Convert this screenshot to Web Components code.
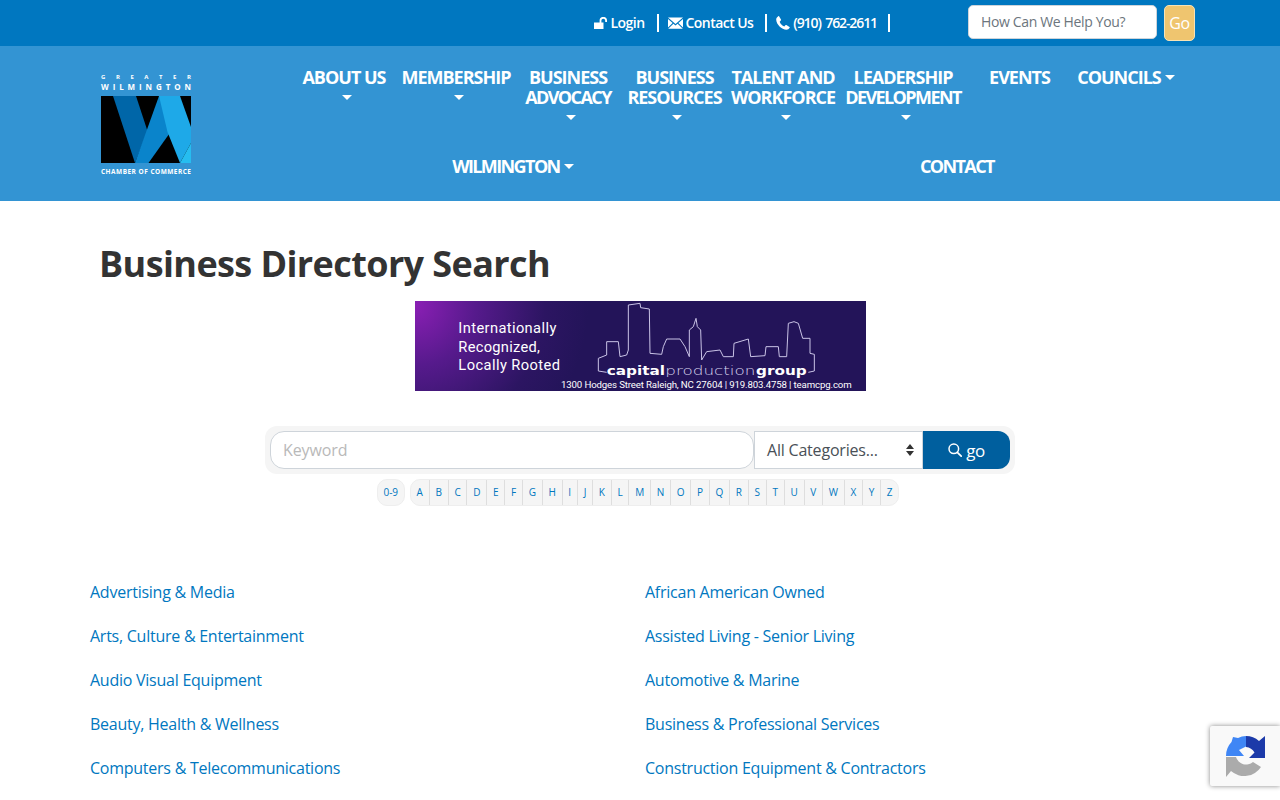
<!DOCTYPE html>
<html lang="en">
<head>
<meta charset="utf-8">
<title>Business Directory Search</title>
<style>
  html, body { margin: 0; padding: 0; background: #fff; overflow: hidden; }
  body { font-family: "Open Sans", "Noto Sans", sans-serif; color: #333; height: 800px; }
</style>
</head>
<body>
<site-header></site-header>
<directory-page></directory-page>
<recaptcha-badge></recaptcha-badge>

<script>
// Icons shared by the top bar and the search form
const ICONS = {
  unlock: '<svg width="14" height="12" viewBox="0 0 14 12"><path fill="#fff" d="M0 5.500h9.500V12H0z"/><path fill="none" stroke="#fff" stroke-width="1.800" d="M6.500 6V3.600a2.800 2.800 0 0 1 5.600 0V5"/></svg>',
  mail: '<svg width="15" height="12" viewBox="0 0 15 12"><path fill="#fff" d="M0 .5h15L7.500 7zM0 2l4.600 4L0 10.400zM15 2v8.400L10.400 6zM5.400 6.700l2.100 1.800 2.100-1.800 5.200 5H.2z"/></svg>',
  phone: '<svg width="14" height="14" viewBox="0 0 14 14"><path fill="#fff" d="M3.200.4 5 3.600c.2.400.1.700-.2 1L3.700 5.700c.5 1.900 2.500 4 4.600 4.700l1.100-1.100c.3-.3.700-.4 1-.2l3.100 1.800c.4.200.4.600.2.900-.8 1.300-1.900 2-3.200 2C5.700 13.800.2 8.300.2 3.500.2 2.100 1 1 2.300.2c.4-.2.700-.1.900.2z"/></svg>',
  search: '<svg width="14" height="14" viewBox="0 0 14 14"><circle cx="5.800" cy="5.800" r="4.800" fill="none" stroke="#fff" stroke-width="1.500"/><path d="M9.300 9.300 13.200 13.200" stroke="#fff" stroke-width="1.700" stroke-linecap="round"/></svg>'
};

class SiteLogo extends HTMLElement {
  constructor() {
    super();
    this.attachShadow({ mode: 'open' });
  }

  connectedCallback() {
    this.shadowRoot.innerHTML = `
      <style>
        :host { display: block; width: 92px; height: 104px; }
        svg { display: block; }
        text { font-family: "Open Sans", sans-serif; fill: #fff; font-weight: 700; }
      </style>
      <svg width="92" height="104" viewBox="0 0 92 104">
        <text x="1" y="5.500" font-size="6" textLength="90" font-weight="400">GREATER</text>
        <text x="1" y="17" font-size="8" textLength="90">WILMINGTON</text>
        <rect x="1" y="23" width="90" height="67" fill="#000"/>
        <polygon points="13,23 36,23 47.500,58 35,90" fill="#0066a8"/>
        <polygon points="59,23 79.500,23 70.500,59 48.500,90 35,90" fill="#0a84cb"/>
        <polygon points="59,23 80,23 91,54 91,70 80,90 67.500,59" fill="#1ea9e8"/>
        <polygon points="80,90 91,70 91,90" fill="#26bdf0"/>
        <text x="1" y="100.500" font-size="6.500" textLength="90">CHAMBER OF COMMERCE</text>
      </svg>
    `;
  }
}
customElements.define('site-logo', SiteLogo);

class NavItem extends HTMLElement {
  constructor() {
    super();
    this.attachShadow({ mode: 'open' });
  }

  connectedCallback() {
    const caret = this.getAttribute('caret');
    // a leading ~ marks a line that has to sit tighter to fit its column
    const lines = this.getAttribute('label').split('|')
      .map(l => l[0] === '~' ? `<span class="tight">${l.slice(1)}</span>` : `<span>${l}</span>`)
      .join('');
    const stacked = caret === 'below';
    this.shadowRoot.innerHTML = `
      <style>
        :host { display: block; text-align: center; white-space: nowrap; }
        .label { display: ${stacked ? 'flex' : 'inline-flex'}; flex-direction: column; align-items: center; }
        .wrap { font-size: 18px; line-height: 20px; font-weight: 700; color: #fff; letter-spacing: -1px; }
        .tight { letter-spacing: -1.6px; }
        .caret { display: inline-block; width: 0; height: 0; border: 5px solid transparent; border-top-color: #fff; border-bottom: 0; }
        .below { display: flex; justify-content: center; height: 20px; align-items: center; padding-left: 5px; }
        .inline { margin-left: 4px; vertical-align: 4px; }
      </style>
      <div class="wrap">
        <div class="label">${lines}</div>${caret === 'inline' ? '<span class="caret inline"></span>' : ''}
        ${stacked ? '<div class="below"><span class="caret"></span></div>' : ''}
      </div>
    `;
  }
}
customElements.define('nav-item', NavItem);

class SiteHeader extends HTMLElement {
  constructor() {
    super();
    this.attachShadow({ mode: 'open' });
  }

  connectedCallback() {
    this.shadowRoot.innerHTML = `
      <style>
        :host { display: block; }
        .top { height: 46px; background: #0077c0; display: flex; justify-content: flex-end; align-items: flex-start; padding-right: 85px; box-sizing: border-box; }
        .links { display: flex; align-items: center; height: 18px; margin-top: 14px; margin-right: 78px; color: #fff; font-size: 14px; font-weight: 600; letter-spacing: -0.55px; line-height: 16px; }
        .links span { display: inline-flex; align-items: center; gap: 3px; height: 18px; padding-right: 12px; margin-right: 9px; border-right: 2px solid #fff; }
        .links span:last-child { margin-right: 0; padding-right: 11px; letter-spacing: -1.1px; word-spacing: 2px; }
        .q { width: 189px; height: 34px; margin-top: 5px; box-sizing: border-box; background: #fff; border: 1px solid #ced4da; border-radius: 5px; padding: 0 12px; font-size: 14px; line-height: 32px; color: #6c757d; letter-spacing: -0.35px; white-space: nowrap; }
        .go { width: 31px; height: 36px; margin: 5px 0 0 7px; box-sizing: border-box; background: #efc56f; border: 1px solid #f7e3b5; border-radius: 5px; color: #fff; font-size: 16px; line-height: 34px; text-align: center; letter-spacing: -0.3px; }
        .main { height: 155px; background: #3394d3; display: flex; align-items: flex-start; box-sizing: border-box; padding-left: 100px; }
        site-logo { margin-top: 27px; margin-right: 99px; flex: none; }
        nav { width: 888px; display: flex; flex-wrap: wrap; align-content: flex-start; }
        .row1 { width: 100%; height: 110px; padding-top: 21px; box-sizing: border-box; display: flex; }
        .row2 { width: 100%; margin-left: -12px; display: flex; justify-content: space-around; }
        .row1 nav-item { flex: none; }
      </style>
      <div class="top">
        <div class="links">
          <span>${ICONS.unlock} Login</span>
          <span>${ICONS.mail} Contact Us</span>
          <span>${ICONS.phone} (910) 762-2611</span>
        </div>
        <div class="q">How Can We Help You?</div>
        <div class="go">Go</div>
      </div>
      <div class="main">
        <site-logo></site-logo>
        <nav>
          <div class="row1">
            <nav-item style="width:106px" label="ABOUT US" caret="below"></nav-item>
            <nav-item style="width:118px" label="MEMBERSHIP" caret="below"></nav-item>
            <nav-item style="width:106px" label="BUSINESS|~ADVOCACY" caret="below"></nav-item>
            <nav-item style="width:107px" label="BUSINESS|RESOURCES" caret="below"></nav-item>
            <nav-item style="width:110px" label="TALENT AND|WORKFORCE" caret="below"></nav-item>
            <nav-item style="width:130px" label="LEADERSHIP|~DEVELOPMENT" caret="below"></nav-item>
            <nav-item style="width:103px" label="EVENTS"></nav-item>
            <nav-item style="width:110px" label="COUNCILS" caret="inline"></nav-item>
          </div>
          <div class="row2">
            <nav-item label="~WILMINGTON" caret="inline"></nav-item>
            <nav-item label="~CONTACT"></nav-item>
          </div>
        </nav>
      </div>
    `;
  }
}
customElements.define('site-header', SiteHeader);

class AdBanner extends HTMLElement {
  constructor() {
    super();
    this.attachShadow({ mode: 'open' });
  }

  connectedCallback() {
    // traced in 3x coordinates, so the viewBox is the banner at 3 times its size
    const skyline = '565,228 565,190 590,180 590,140 625,140 630,185 650,180 655,165 655,30 690,25 692,38 718,42 720,175 755,178 760,155 770,132 810,132 825,155 838,185 838,105 850,95 858,70 862,95 872,105 875,195 890,170 930,165 940,185 970,185 972,145 1015,132 1022,185 1065,182 1068,155 1105,155 1108,185 1130,185 1135,85 1152,80 1165,85 1178,130 1200,130 1200,175 1213,178 1213,228 1195,232';
    this.shadowRoot.innerHTML = `
      <style>
        :host { display: block; width: 451px; height: 90px; }
        svg { display: block; }
        text { fill: #fff; font-family: Roboto, sans-serif; }
        .brand { font-family: "DejaVu Sans", sans-serif; font-size: 36px; }
      </style>
      <svg width="451" height="90" viewBox="15 18 1353 270">
        <defs>
          <radialGradient id="bg" gradientUnits="userSpaceOnUse" cx="15" cy="30" r="520">
            <stop offset="0" stop-color="#8a1fb4"/>
            <stop offset="0.35" stop-color="#561a8c"/>
            <stop offset="0.75" stop-color="#2c1562"/>
            <stop offset="1" stop-color="#231459"/>
          </radialGradient>
        </defs>
        <rect x="15" y="18" width="1353" height="270" fill="url(#bg)"/>
        <text x="145" y="113" font-size="44" textLength="294">Internationally</text>
        <text x="145" y="170" font-size="44" textLength="245">Recognized,</text>
        <text x="145" y="225" font-size="44" textLength="305">Locally Rooted</text>
        <polyline points="${skyline}" fill="none" stroke="#c9c3e6" stroke-width="3"/>
        <polyline points="565,228 590,232" fill="none" stroke="#c9c3e6" stroke-width="3"/>
        <text class="brand" x="590" y="240" font-weight="700" textLength="175" lengthAdjust="spacingAndGlyphs">capital</text>
        <text class="brand" x="766" y="240" font-weight="200" textLength="270" lengthAdjust="spacingAndGlyphs" style="fill:#d8d4ee">production</text>
        <text class="brand" x="1038" y="240" font-weight="700" textLength="152" lengthAdjust="spacingAndGlyphs">group</text>
        <text x="453" y="280" font-size="29" textLength="872">1300 Hodges Street Raleigh, NC 27604 | 919.803.4758 | teamcpg.com</text>
      </svg>
    `;
  }
}
customElements.define('ad-banner', AdBanner);

class DirectorySearch extends HTMLElement {
  constructor() {
    super();
    this.attachShadow({ mode: 'open' });
  }

  connectedCallback() {
    this.shadowRoot.innerHTML = `
      <style>
        :host { display: flex; width: 750px; height: 48px; box-sizing: border-box; padding: 5px; background: #f5f5f5; border-radius: 12px; font-size: 16px; }
        .keyword { width: 484px; box-sizing: border-box; background: #fff; border: 1px solid #ced4da; border-radius: 14px; padding: 0 12px; line-height: 36px; color: #b9b9b9; letter-spacing: -0.1px; }
        .cat { width: 169px; box-sizing: border-box; background: #fff; border: 1px solid #ced4da; padding: 0 12px; line-height: 34px; color: #495057; display: flex; justify-content: space-between; align-items: center; white-space: nowrap; letter-spacing: -0.2px; }
        .cat svg { flex: none; margin-right: -4px; }
        .btn { width: 87px; background: #005f9e; color: #fff; border-radius: 0 12px 12px 0; display: flex; align-items: center; justify-content: center; gap: 4px; font-weight: 500; font-size: 17px; letter-spacing: -0.4px; }
      </style>
      <div class="keyword">Keyword</div>
      <div class="cat">All Categories...
        <svg width="8" height="12" viewBox="0 0 8 12"><path fill="#333" d="M4 0 8 5H0zM4 12 0 7h8z"/></svg>
      </div>
      <div class="btn">${ICONS.search} go</div>
    `;
  }
}
customElements.define('directory-search', DirectorySearch);

class AlphaPager extends HTMLElement {
  constructor() {
    super();
    this.attachShadow({ mode: 'open' });
  }

  connectedCallback() {
    const letters = 'ABCDEFGHIJKLMNOPQRSTUVWXYZ'.split('');
    this.shadowRoot.innerHTML = `
      <style>
        :host { display: flex; justify-content: center; gap: 5px; font-size: 10px; color: #0077c0; padding-right: 4px; }
        .group { display: flex; height: 27px; background: #f5f5f5; border: 1px solid #eee; box-sizing: border-box; border-radius: 10px; line-height: 25px; }
        a { display: block; padding: 0 5.750px; border-left: 1px solid #dedede; }
        a:first-child { border-left: 0; }
      </style>
      <div class="group"><a>0-9</a></div>
      <div class="group">${letters.map(l => `<a>${l}</a>`).join('')}</div>
    `;
  }
}
customElements.define('alpha-pager', AlphaPager);

class CategoryList extends HTMLElement {
  constructor() {
    super();
    this.attachShadow({ mode: 'open' });
  }

  connectedCallback() {
    const items = [
      'Advertising &amp; Media', 'African American Owned',
      'Arts, Culture &amp; Entertainment', 'Assisted Living - Senior Living',
      'Audio Visual Equipment', 'Automotive &amp; Marine',
      'Beauty, Health &amp; Wellness', 'Business &amp; Professional Services',
      'Computers &amp; Telecommunications', 'Construction Equipment &amp; Contractors'
    ];
    this.shadowRoot.innerHTML = `
      <style>
        :host { display: grid; grid-template-columns: 555px 555px; grid-auto-rows: 44px; font-size: 16px; line-height: 22px; color: #0077c0; }
        a { display: block; white-space: nowrap; letter-spacing: -0.25px; }
      </style>
      ${items.map(i => `<a>${i}</a>`).join('')}
    `;
  }
}
customElements.define('category-list', CategoryList);

class DirectoryPage extends HTMLElement {
  constructor() {
    super();
    this.attachShadow({ mode: 'open' });
  }

  connectedCallback() {
    this.shadowRoot.innerHTML = `
      <style>
        :host { display: block; }
        h1 { margin: 0; padding: 41px 0 0 99px; height: 59px; font-size: 36px; line-height: 44px; font-weight: 700; color: #333; letter-spacing: -0.6px; box-sizing: content-box; }
        ad-banner { margin: 0 0 0 415px; }
        directory-search { margin: 35px auto 0; }
        alpha-pager { margin-top: 5px; }
        category-list { margin: 75px 0 0 90px; }
      </style>
      <h1>Business Directory Search</h1>
      <ad-banner></ad-banner>
      <directory-search></directory-search>
      <alpha-pager></alpha-pager>
      <category-list></category-list>
    `;
  }
}
customElements.define('directory-page', DirectoryPage);

class RecaptchaBadge extends HTMLElement {
  constructor() {
    super();
    this.attachShadow({ mode: 'open' });
  }

  connectedCallback() {
    this.shadowRoot.innerHTML = `
      <style>
        :host { position: fixed; right: 0; top: 726px; width: 70px; height: 60px; background: #f9f9f9; box-shadow: 0 0 5px #888; border-radius: 2px 0 0 2px; display: flex; align-items: center; justify-content: center; }
        svg { display: block; }
      </style>
      <svg width="42" height="44" viewBox="0 0 42 44">
        <path fill="#ababab" d="M2 23H12A10.500 10.500 0 0 0 29 28L37 33A20 20 0 0 1 7 37L2 43Z"/>
        <path fill="#3f86f5" d="M22 2V12.500L15 16l5 6H2A20 20 0 0 1 7.500 8L9 3 14 4A20 20 0 0 1 22 2Z"/>
        <path fill="#1c3aa9" d="M22 2A20 20 0 0 1 35 7L41 2V24H25L30.500 18.500A11 11 0 0 0 22 13Z"/>
      </svg>
    `;
  }
}
customElements.define('recaptcha-badge', RecaptchaBadge);
</script>
</body>
</html>
